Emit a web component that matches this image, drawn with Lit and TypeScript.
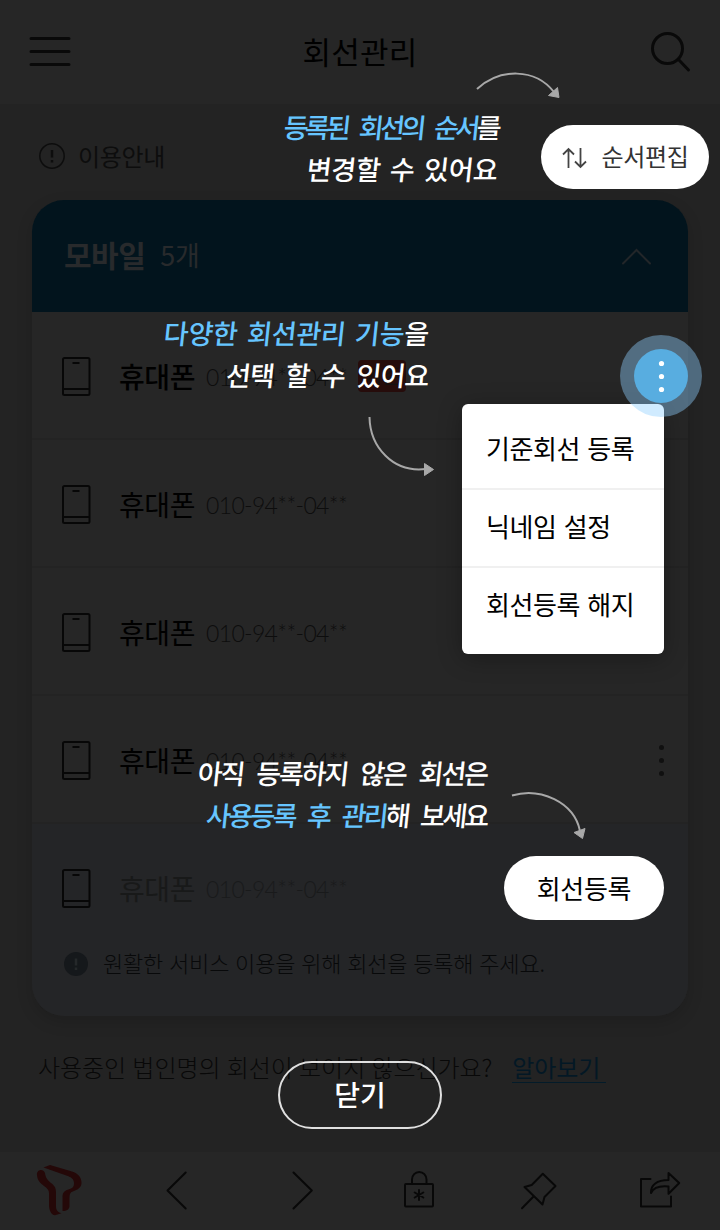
import { LitElement, html, css, svg } from "lit";
import { customElement } from "lit/decorators.js";

const rows = [
  { state: "primary", more: false },
  { state: "", more: false },
  { state: "", more: false },
  { state: "", more: true },
  { state: "pending", more: false },
];

const menuItems = ["기준회선 등록", "닉네임 설정", "회선등록 해지"];

const navIcons = [
  svg`<g fill="#240808" stroke="none">
    <path d="M37 23C36 18 43 15.500 45 21C45.500 26 48 28.500 51 31C55 34 56 36 56 41V54C56 58 57.500 60 61.500 61.300L55 63.200C51 63 49.300 58 49 54V41C49 38 47 36 44 34C40 31 37.300 28 37 23Z"/>
    <path d="M43.500 15.600L50 13L72 19.500C78 21.500 81.500 25 81.500 31C81.500 37 75 38.500 71.500 40C70 41 69.500 43 69.500 46V54C69.500 57 67 59 62.500 59V45C62.500 40 65 38.500 69 37.300C73 36 74 34.500 74 31C74 27 71 25 67 23.700Z"/>
  </g>`,
  svg`<path d="M65.700 20.500L47.500 38.500L65.700 56.500"/>`,
  svg`<path d="M53.500 20.500L71.800 38.500L53.500 56.500"/>`,
  svg`<rect x="45" y="32" width="28" height="22.500" rx="1"/>
    <path d="M52 32V27.500A7.200 7.500 0 0 1 66.500 27.500V32"/>
    <path d="M59 38V48M54.700 40.500L63.300 45.500M63.300 40.500L54.700 45.500" stroke-width="2"/>`,
  svg`<path d="M62.800 21.700L75.500 34L64.500 45L62.500 52.500L44.500 35L51.700 33ZM53.800 44.300L42 56.300"/>`,
  svg`<path d="M50.500 27H41V54.500H71V44.500"/>
    <path d="M68.500 21L79.200 31L68.500 41.800V34.500C58 33.500 53 36.500 51 41C50.500 33 57 28 68.500 28Z"/>`,
];

@customElement("line-row")
export class LineRow extends LitElement {
  static properties = { state: { type: String }, more: { type: Boolean } };
  declare state: string;
  declare more: boolean;

  static styles = css`
    :host { display: block; }
    .row {
      box-sizing: border-box; height: 128px; padding: 2px 24px 0 30px;
      display: flex; align-items: center; border-bottom: 2px solid #232323;
    }
    .phone { margin-top: 2px; flex: none; }
    .name {
      width: 86px; margin-left: 28px; font-size: 28px; line-height: 40px;
      letter-spacing: -0.4px; color: #000; white-space: nowrap;
    }
    .number {
      width: 141px; padding-top: 2px; margin-left: 1px; font-family: Lato, sans-serif;
      font-size: 23px; font-weight: 300; line-height: 40px; letter-spacing: -0.65px;
      color: #0d0d0d; white-space: nowrap;
    }
    .primary .name { font-weight: 500; }
    .pending { border-bottom-color: transparent; }
    .pending .name { color: #181919; }
    .pending .number { color: #191a1b; }
    .badge {
      width: 48px; height: 32px; margin-left: 11px; border-radius: 4px;
      background: #260c0b; color: #151010; font-size: 20px; line-height: 31px; text-align: center;
    }
    .more { margin-left: auto; }
  `;

  render() {
    return html`<div class="row ${this.state}">
      <svg class="phone" width="29" height="40" viewBox="0 0 29 40" fill="none" stroke="#070707" stroke-width="2">
        <rect x="1" y="1" width="26.500" height="37" rx="1.500"/>
        <path d="M1 32H27M10.500 6H17.500"/>
      </svg>
      <span class="name">휴대폰</span>
      <span class="number">010-94**-04**</span>
      ${this.state === "primary" ? html`<span class="badge">기준</span>` : ""}
      ${this.more
        ? html`<svg class="more" width="6" height="34" viewBox="0 0 6 34" fill="#101010">
            <circle cx="3.500" cy="4.500" r="2.500"/><circle cx="3.500" cy="17.500" r="2.500"/><circle cx="3.500" cy="30.500" r="2.500"/>
          </svg>`
        : ""}
    </div>`;
  }
}

@customElement("app-root")
export class AppRoot extends LitElement {
  static styles = css`
    :host {
      display: block; position: relative; width: 720px; height: 1230px; overflow: hidden;
      background: #232323; color: #000;
      font-family: "Noto Sans CJK KR", "Noto Sans", sans-serif;
    }
    .page { display: flex; flex-direction: column; height: 1230px; }
    .top {
      box-sizing: border-box; height: 104px; padding: 0 28px; background: #262626;
      display: flex; align-items: center; justify-content: space-between;
    }
    .top h1 { margin: 0 0 2px; font-size: 31px; font-weight: 400; letter-spacing: 0.2px; line-height: 44px; }
    .guide {
      height: 96px; padding: 8px 0 0 39px; box-sizing: border-box;
      display: flex; align-items: center; gap: 13px;
      font-size: 24px; letter-spacing: -0.3px; color: #0d0d0d;
    }
    .guide span { margin-top: -2px; }
    .card {
      height: 816px; margin: 0 32px; border-radius: 32px; overflow: hidden;
      background: #262626; box-shadow: 0 6px 16px rgba(0, 0, 0, 0.15);
    }
    .card-head {
      box-sizing: border-box; height: 112px; padding: 0 36px 4px 32px; background: #02141d;
      display: flex; align-items: center; color: #282a2c;
    }
    .card-head strong { font-size: 30px; font-weight: 700; letter-spacing: -0.5px; }
    .card-head span { margin-left: 15px; font-size: 27px; letter-spacing: -0.3px; }
    .card-head svg { margin: 6px 0 0 auto; }
    .unregistered { height: 192px; background: #242527; }
    .notice {
      display: flex; align-items: center; gap: 15px; padding-left: 32px; height: 24px;
      font-size: 22px; font-weight: 300; letter-spacing: -0.18px; word-spacing: 1.2px;
      color: #08090a; white-space: nowrap;
    }
    .notice span { margin-top: -4px; }
    .help {
      display: flex; height: 136px; box-sizing: border-box; padding: 35px 0 0 38px;
      align-items: flex-start; font-size: 24px; font-weight: 300; line-height: 32px;
      letter-spacing: -0.07px; word-spacing: 1.1px; color: #080808; white-space: nowrap;
    }
    .help a { margin-left: 20px; padding-right: 6px; line-height: 31px; color: #031825; border-bottom: 1px solid #031b29; font-weight: 400; }
    .nav { height: 78px; background: #262626; display: grid; grid-template-columns: repeat(6, 120px); }

    .coach { position: absolute; inset: 0; }
    .pill {
      position: absolute; height: 64px; box-sizing: border-box; padding-bottom: 2px; border-radius: 32px; background: #fff;
      display: flex; align-items: center; justify-content: center; white-space: nowrap;
    }
    .order { left: 541px; top: 125px; width: 168px; gap: 13px; font-size: 24px; letter-spacing: -0.3px; color: #333; padding-bottom: 3px; padding-left: 1px; }
    .order svg { margin-top: 4px; }
    .register { left: 504px; top: 856px; width: 160px; font-size: 26px; letter-spacing: -0.3px; }
    .menu {
      position: absolute; left: 462px; top: 404px; width: 202px; height: 250px;
      box-sizing: border-box; padding-top: 8px; border-radius: 6px; background: #fff;
      box-shadow: 0 4px 24px rgba(0, 0, 0, 0.3);
    }
    .item {
      box-sizing: border-box; height: 78px; padding-left: 24px; border-bottom: 2px solid #f0f0f0;
      font-size: 26px; line-height: 71px; letter-spacing: -0.4px; word-spacing: 1.8px; white-space: nowrap;
    }
    .item:last-child { border-bottom: 0; }
    .spot {
      position: absolute; left: 620px; top: 335px; width: 82px; height: 82px; border-radius: 50%;
      background: rgba(144, 208, 255, 0.42); display: grid; place-items: center;
    }
    .close {
      position: absolute; left: 278px; top: 1061px; width: 164px; height: 68px; box-sizing: border-box;
      border: 2px solid #e0e0e0; border-radius: 34px; color: #fff;
      font-size: 28px; font-weight: 500; letter-spacing: -0.1px; line-height: 62px; text-align: center;
    }
    .arrows { position: absolute; left: 0; top: 0; }
    .tip {
      position: absolute; color: #fff; font-size: 27px; font-weight: 500; line-height: 42px;
      letter-spacing: -3.6px; word-spacing: 9px; text-align: right; white-space: nowrap;
    }
    .tip div { transform: skewX(-6deg); }
    .tip b { font-weight: 500; color: #66c5ff; }
    .tip .loose { letter-spacing: -0.2px; word-spacing: 3.5px; }
    .tip .open { letter-spacing: -0.7px; word-spacing: 6px; }
    .tip .mid { letter-spacing: -2.1px; }
    .tip .slim { letter-spacing: -2.7px; }
    .tip-order { right: 222px; top: 106px; }
    .tip-menu { right: 291px; top: 312px; }
    .tip-register { right: 233px; top: 752px; }
  `;

  render() {
    return html`
      <div class="page">
        <header class="top">
          <svg width="44" height="44" viewBox="0 0 44 44" stroke="#090909" stroke-width="3" stroke-linecap="round">
            <path d="M3 8.500H41M3 21.500H41M3 34.500H41"/>
          </svg>
          <h1>회선관리</h1>
          <svg width="44" height="44" viewBox="0 0 44 44" fill="none" stroke="#090909" stroke-width="3" stroke-linecap="round">
            <circle cx="19.500" cy="18.500" r="15"/><path d="M30.500 29.500L40.500 40"/>
          </svg>
        </header>
        <div class="guide">
          <svg width="26" height="26" viewBox="0 0 26 26" fill="none" stroke="#0d0d0d" stroke-width="1.500">
            <circle cx="13" cy="13" r="12.200"/><path d="M13 7V14.500M13 17V19.500" stroke-width="2.500"/>
          </svg>
          <span>이용안내</span>
        </div>
        <section class="card">
          <div class="card-head">
            <strong>모바일</strong><span>5개</span>
            <svg width="30" height="18" viewBox="0 0 30 18" fill="none" stroke="#222629" stroke-width="2" stroke-linecap="round">
              <path d="M1 15.500L14.500 2L28 15.500"/>
            </svg>
          </div>
          ${rows.slice(0, 4).map((r) => html`<line-row .state=${r.state} .more=${r.more}></line-row>`)}
          <div class="unregistered">
            <line-row .state=${rows[4].state} .more=${false}></line-row>
            <div class="notice">
              <svg width="24" height="24" viewBox="0 0 24 24">
                <circle cx="12" cy="12" r="12" fill="#15181b"/>
                <path d="M12 6.500V13.500M12 15.500V18" stroke="#25282a" stroke-width="2.500"/>
              </svg>
              <span>원활한 서비스 이용을 위해 회선을 등록해 주세요.</span>
            </div>
          </div>
        </section>
        <div class="help"><span>사용중인 법인명의 회선이 보이지 않으신가요?</span><a>알아보기</a></div>
        <nav class="nav">
          ${navIcons.map((icon) => html`<svg width="120" height="78" viewBox="0 0 120 78" fill="none" stroke="#080808" stroke-width="2" stroke-linejoin="round" stroke-linecap="round">${icon}</svg>`)}
        </nav>
      </div>

      <div class="coach">
        <div class="menu">${menuItems.map((t) => html`<div class="item">${t}</div>`)}</div>
        <div class="spot">
          <svg width="54" height="54" viewBox="0 0 54 54" fill="#fff">
            <circle cx="27" cy="27" r="27" fill="#58ade0"/>
            <circle cx="27.500" cy="14.500" r="2.600"/><circle cx="27.500" cy="27.500" r="2.600"/><circle cx="27.500" cy="40.500" r="2.600"/>
          </svg>
        </div>
        <div class="pill order">
          <svg width="26" height="22" viewBox="0 0 26 22" fill="none" stroke="#444" stroke-width="1.800">
            <path d="M6.500 21V2M1 7.500L6.500 2L12 7.500M18.500 1V20M13 14.500L18.500 20L24 14.500"/>
          </svg>
          <span>순서편집</span>
        </div>
        <div class="pill register">회선등록</div>
        <div class="close">닫기</div>
        <svg class="arrows" width="720" height="1230" viewBox="0 0 720 1230" fill="none" stroke="#a8a8a8" stroke-width="2">
          <path d="M477 89C500 68 535 68 554 92"/>
          <path d="M369.500 417C370 447 393 473 426 469"/>
          <path d="M512 795.500C540 787 574 802 580 831"/>
          <g fill="#a8a8a8" stroke="#a8a8a8" stroke-width="1" stroke-linejoin="round">
            <path d="M548.500 95.500L557.500 87.500L559 97.500Z"/>
            <path d="M424.500 463.500L433.500 469.500L424.500 475.500Z"/>
            <path d="M574 832.500L585 828.500L582.500 838.500Z"/>
          </g>
        </svg>
        <div class="tip tip-order"><div><b>등록된 회선의 순서</b>를</div><div class="loose">변경할 수 있어요</div></div>
        <div class="tip tip-menu"><div class="loose"><b>다양한 회선관리 기능</b>을</div><div class="open">선택 할 수 있어요</div></div>
        <div class="tip tip-register"><div class="mid">아직 등록하지 않은 회선은</div><div class="slim"><b>사용등록 후 관리</b>해 보세요</div></div>
      </div>
    `;
  }
}
